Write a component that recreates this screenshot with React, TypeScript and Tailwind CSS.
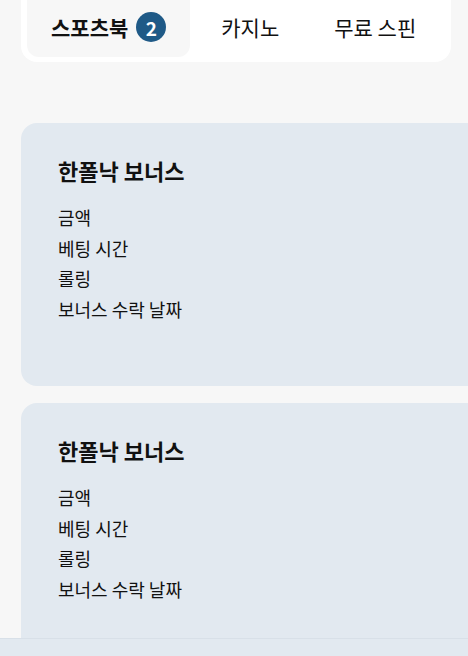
import React from "react";

const font = { fontFamily: '"Noto Sans CJK KR", "Noto Sans", sans-serif' };

function Card() {
  return (
    <div className="w-[480px] h-[263px] shrink-0 rounded-2xl bg-[#e2e9f0] pl-[37px] pt-[34px]">
      <h2 className="text-[22px] font-bold leading-[27px] text-[#111]">한폴낙 보너스</h2>
      <ul className="mt-[18px] text-[18px] leading-[30.5px] text-[#111]">
        <li>금액</li>
        <li>베팅 시간</li>
        <li>롤링</li>
        <li>보너스 수락 날짜</li>
      </ul>
    </div>
  );
}

export default function App() {
  return (
    <div className="min-h-[656px] h-[656px] w-[468px] overflow-hidden bg-[#f7f7f7]" style={font}>
      <div className="mx-[21px] flex w-[430px] gap-[7px] rounded-b-2xl bg-white px-[6px] pb-[5px]">
        <div className="flex h-[57px] items-center gap-[8px] rounded-b-xl bg-[#f7f7f7] px-6 pb-[3px]">
          <span className="text-[21px] font-bold leading-none text-[#111]">스포츠북</span>
          <span className="flex h-[30px] w-[30px] items-center justify-center rounded-full bg-[#1f5a87] text-[19px] font-bold leading-none text-white">
            2
          </span>
        </div>
        <div className="flex h-[57px] items-center px-6 pb-[3px] text-[21px] leading-none text-[#111]">카지노</div>
        <div className="flex h-[57px] items-center px-6 pb-[3px] text-[21px] leading-none text-[#111]">무료 스핀</div>
      </div>
      <div className="mt-[61px] flex flex-col gap-[17px] pl-[21px]">
        <Card />
        <Card />
      </div>
      <div className="fixed bottom-0 left-0 h-[18px] w-full border-t border-[#d8e0e8] bg-[#e2e9f0]" />
    </div>
  );
}
